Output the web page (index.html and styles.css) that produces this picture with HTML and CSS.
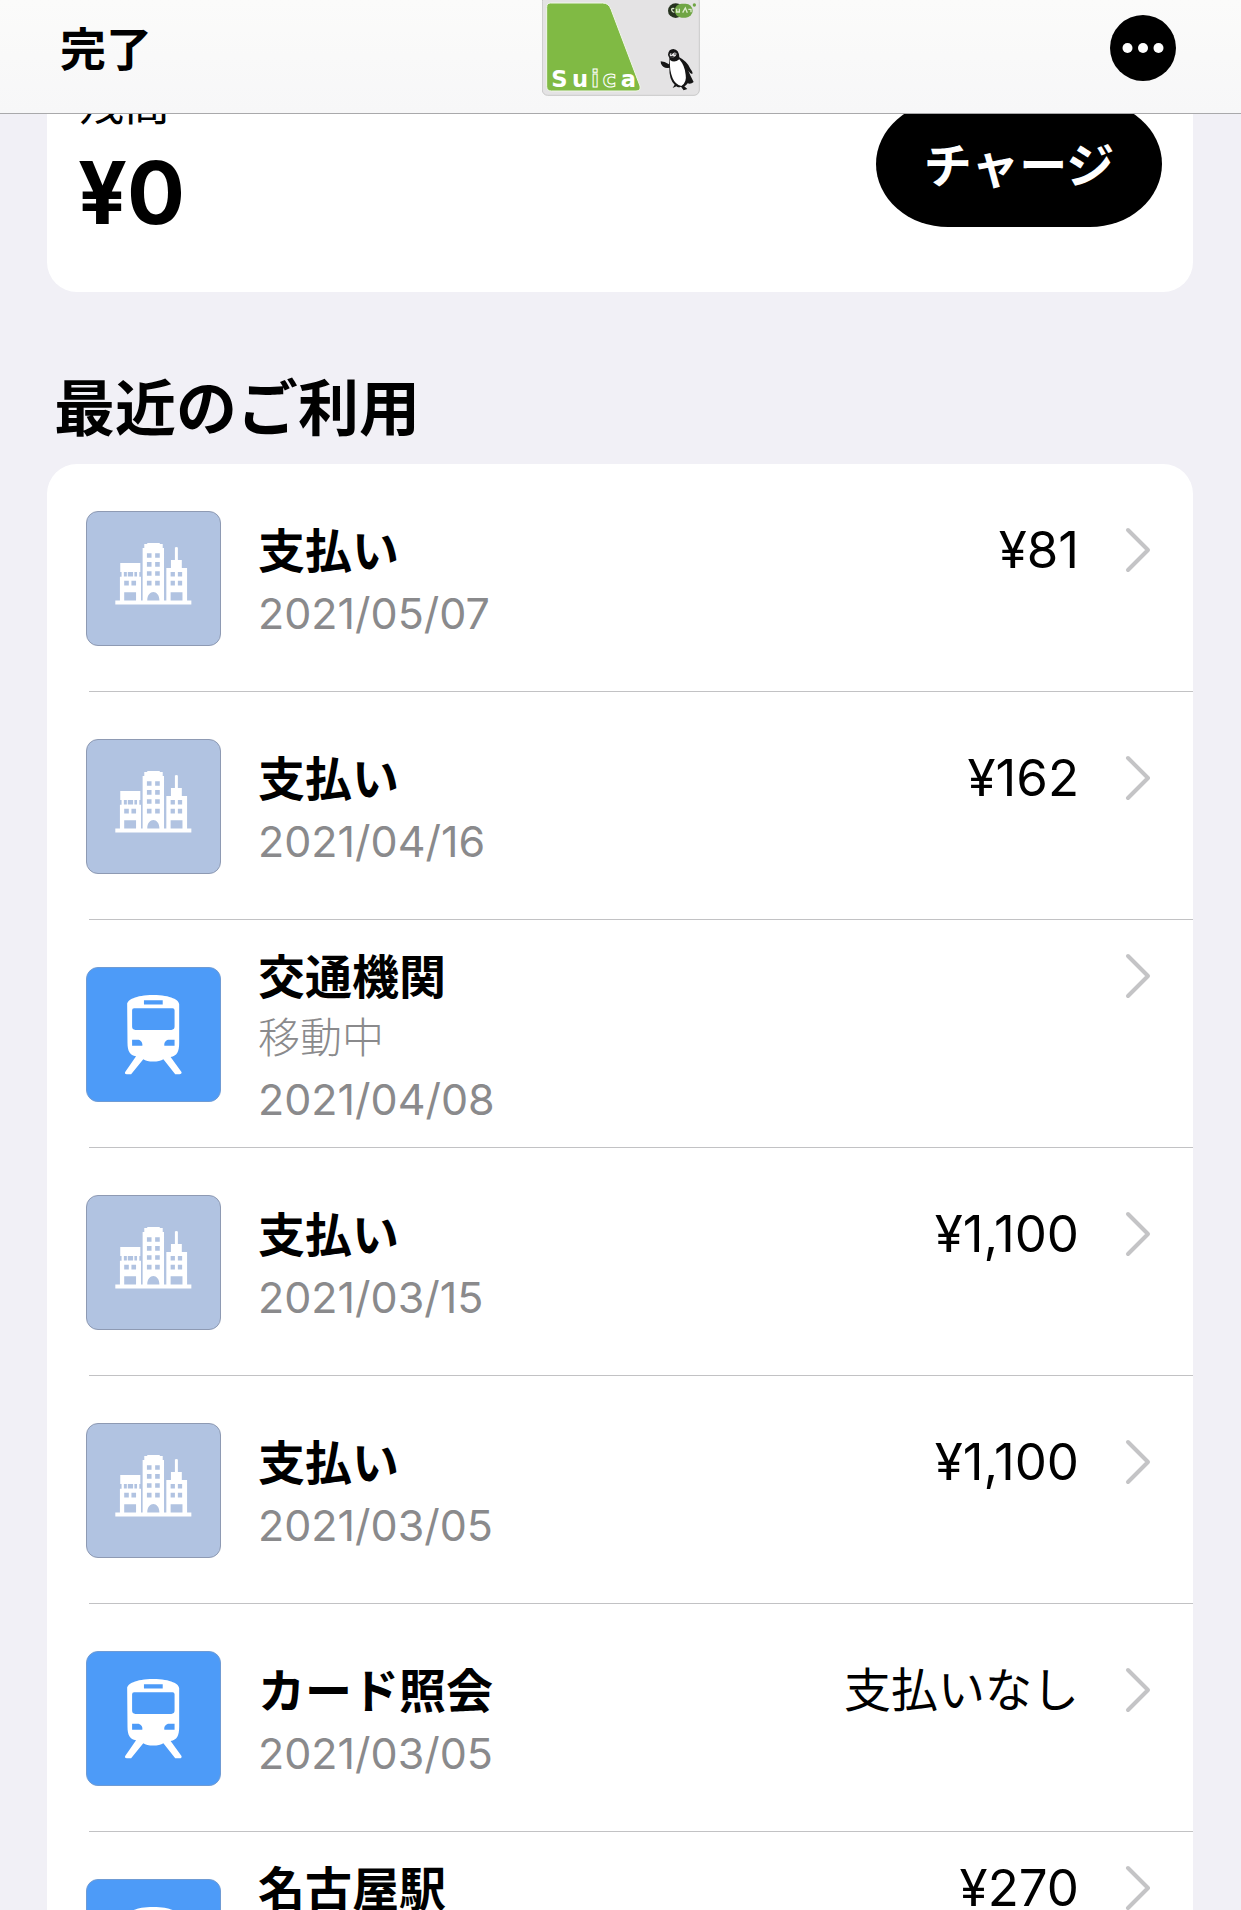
FILE: index.html
```html
<!DOCTYPE html>
<html lang="ja">
<head>
<meta charset="utf-8">
<meta name="viewport" content="width=device-width, initial-scale=1">
<title>Suica</title>
<link rel="stylesheet" href="styles.css">
</head>
<body>
<svg class="sprite" aria-hidden="true">
  <symbol id="city" viewBox="19 34 404 404">
    <path fill="#fff" fill-rule="evenodd" d="M105 303H119V231H124V216H120V189H181V216H178V231H183V303H188V143H193V131H202V128H240V131H249V143H253V303H260V204H274V180H286V142Q290 138 295 142V180H307V204H323V303H336V315H105ZM131 216v14h9v-14zM143 216v14h16v-14zM163 216v14h8v-14zM132 243v14h14v-14zM154 243v14h14v-14zM132 278v25h36v-25zM201 159v14h14v-14zM226 159v14h14v-14zM201 186v14h14v-14zM226 186v14h14v-14zM201 214v14h14v-14zM226 214v14h14v-14zM201 243v14h14v-14zM226 243v14h14v-14zM202 303C202 268 239 268 239 303zM273 216v14h13v-14zM295 216v14h13v-14zM273 243v14h13v-14zM295 243v14h13v-14zM273 278v25h36v-25z"/>
  </symbol>
  <symbol id="train" viewBox="19 22 404 404">
    <path fill="#fff" fill-rule="evenodd" d="M141 132C141 120 165 104 220 104S299 120 299 132V250C299 276 292 290 273 292L306 338Q308 345 300 345H287L251 299Q240 306 220 306T190 299L153 345H140Q132 344 135 338L168 290C149 288 142 274 142 250ZM192 120V133H249V120ZM162 144Q156 144 156 150V200Q156 210 166 210H275Q285 210 285 200V150Q285 144 279 144ZM156 240V258H187C189 248 181 240 173 240ZM285 240V258H254C252 248 260 240 268 240Z"/>
  </symbol>
  <symbol id="chevron" viewBox="0 0 26 46">
    <path d="M3 3L23 23L3 43" fill="none" stroke="#c4c4c6" stroke-width="4" stroke-linecap="round" stroke-linejoin="round"/>
  </symbol>
</svg>

<header class="bar">
  <button class="bar-done" type="button">完了</button>
  <svg class="bar-card" viewBox="66 0 474 288" role="img" aria-label="Suica">
    <rect x="67" y="-12" width="471" height="298" rx="16" fill="#e4e3e4" stroke="#c9c9c9" stroke-width="3"/>
    <path d="M92 9H248Q266 9 273 28L360 258Q363 273 348 273H94Q80 273 80 259V22Q80 9 92 9Z" fill="#80ba44" stroke="#f1f7ea" stroke-width="3"/>
    <g class="bar-card-text">
      <text x="94" y="262" fill="#fff">S</text>
      <text x="156" y="262" fill="#fff">u</text>
      <text x="214" y="262" fill="#80ba44" stroke="#fff" stroke-width="3">i</text>
      <text x="248" y="262" fill="#80ba44" stroke="#fff" stroke-width="3">c</text>
      <text x="302" y="262" fill="#fff">a</text>
    </g>
    <ellipse cx="467" cy="32" rx="23" ry="22" fill="#26331f"/>
    <rect x="464" y="11" width="54" height="42" rx="21" fill="#6fa544"/>
    <circle cx="523" cy="15" r="5" fill="#6fa544"/>
    <path d="M463 26Q454 24 455 30T463 37M470 26V36H478V26M488 38L496 24L502 38M505 28H513V37" fill="none" stroke="#dceccb" stroke-width="4"/>
    <path d="M444 165Q445 147 460 147Q477 148 478 172Q501 184 511 206Q521 219 516 222Q509 219 505 212Q512 229 521 246Q512 254 503 250Q498 257 493 259L502 267L491 271L483 260Q474 264 469 259L458 264L464 254Q447 238 448 203Q432 208 423 191L422 184L434 186L447 193Q449 182 448 174Z" fill="#151515"/>
    <path d="M450 180Q463 190 478 178Q495 198 497 224Q501 247 484 258Q466 254 458 235Q448 211 450 180Z" fill="#fff"/>
    <path d="M449 163Q453 156 457 162Q463 153 470 161L467 168L458 173L450 169Z" fill="#e4e3e4"/>
    <path d="M446 170L458 167L463 171L455 175Z" fill="#333"/>
    <circle cx="454" cy="162" r="2"/><circle cx="465" cy="162" r="2"/>
  </svg>
  <button class="bar-more" type="button" aria-label="その他">
    <svg viewBox="0 0 66 66" aria-hidden="true"><circle cx="33" cy="33" r="33"/><g fill="#fff"><circle cx="17.5" cy="33" r="5"/><circle cx="33" cy="33" r="5"/><circle cx="48.5" cy="33" r="5"/></g></svg>
  </button>
</header>

<main class="content">
  <section class="balance">
    <div>
      <p class="balance-label">残高</p>
      <p class="balance-value">¥0</p>
    </div>
    <button class="charge" type="button">チャージ</button>
  </section>

  <h2 class="heading">最近のご利用</h2>
  <ul class="list">
    <li><a class="row" href="#"><span class="tile"><svg><use href="#city"/></svg></span><span class="info"><strong>支払い</strong><time>2021/05/07</time></span><span class="amount">¥81</span><svg class="chevron"><use href="#chevron"/></svg></a></li>
    <li><a class="row" href="#"><span class="tile"><svg><use href="#city"/></svg></span><span class="info"><strong>支払い</strong><time>2021/04/16</time></span><span class="amount">¥162</span><svg class="chevron"><use href="#chevron"/></svg></a></li>
    <li><a class="row row-three" href="#"><span class="tile tile-transit"><svg><use href="#train"/></svg></span><span class="info"><strong>交通機関</strong><span class="status">移動中</span><time>2021/04/08</time></span><svg class="chevron"><use href="#chevron"/></svg></a></li>
    <li><a class="row" href="#"><span class="tile"><svg><use href="#city"/></svg></span><span class="info"><strong>支払い</strong><time>2021/03/15</time></span><span class="amount">¥1,100</span><svg class="chevron"><use href="#chevron"/></svg></a></li>
    <li><a class="row" href="#"><span class="tile"><svg><use href="#city"/></svg></span><span class="info"><strong>支払い</strong><time>2021/03/05</time></span><span class="amount">¥1,100</span><svg class="chevron"><use href="#chevron"/></svg></a></li>
    <li><a class="row" href="#"><span class="tile tile-transit"><svg><use href="#train"/></svg></span><span class="info"><strong>カード照会</strong><time>2021/03/05</time></span><span class="amount amount-none">支払いなし</span><svg class="chevron"><use href="#chevron"/></svg></a></li>
    <li><a class="row row-three" href="#"><span class="tile tile-transit"><svg><use href="#train"/></svg></span><span class="info"><strong>名古屋駅</strong></span><span class="amount">¥270</span><svg class="chevron"><use href="#chevron"/></svg></a></li>
  </ul>
</main>
</body>
</html>
```

FILE: styles.css
```css
* {
  box-sizing: border-box;
}

body {
  margin: 0;
  height: 100vh;
  overflow: hidden;
  background: #f1f0f6;
  color: #000;
  font-family: Inter, "Noto Sans CJK JP", sans-serif;
}

p,
h2,
ul {
  margin: 0;
  padding: 0;
}

button {
  border: 0;
  padding: 0;
  background: none;
  color: inherit;
  font-family: inherit;
  cursor: pointer;
}

.sprite {
  position: absolute;
  width: 0;
  height: 0;
}

/* Navigation bar */
.bar {
  position: sticky;
  top: 0;
  z-index: 1;
  display: grid;
  grid-template-columns: 1fr auto 1fr;
  align-items: start;
  height: 114px;
  padding: 0 60px;
  border-bottom: 1px solid #a9a9ab;
  background: linear-gradient(#fbfbfa, #f7f7f8);
}

.bar-done {
  justify-self: start;
  height: 92px;
  font-size: 46px;
  font-weight: 700;
}

.bar-card {
  display: block;
  width: 158px;
  height: 96px;
}

.bar-card-text {
  font: bold 68px "DejaVu Sans", sans-serif;
}

.bar-more {
  justify-self: end;
  width: 66px;
  height: 66px;
  margin: 15px 5px 0 0;
}

.bar-more svg {
  display: block;
}

.content {
  padding: 0 48px 0 47px;
}

/* Balance card, scrolled partly under the bar */
.balance {
  display: flex;
  justify-content: space-between;
  align-items: flex-start;
  margin-top: -60px;
  padding: 24px 31px 49px;
  border-radius: 30px;
  background: #fff;
}

.balance-label {
  font-size: 46px;
  line-height: 50px;
}

.balance-value {
  margin-top: 15px;
  font-size: 86px;
  font-weight: 700;
  line-height: 100px;
}

.charge {
  width: 286px;
  height: 126px;
  margin-top: 23px;
  padding-bottom: 4px;
  border-radius: 72px / 63px;
  background: #000;
  color: #fff;
  font-size: 48px;
  font-weight: 700;
}

.heading {
  padding: 72px 0 10px 7px;
  font-size: 61px;
  font-weight: 700;
  line-height: 90px;
}

/* Transactions */
.list {
  border-radius: 30px;
  background: #fff;
  list-style: none;
}

.list li + li::before {
  content: "";
  display: block;
  height: 1px;
  margin-left: 42px;
  background: #c2c2c4;
}

.row {
  display: flex;
  align-items: flex-start;
  height: 227px;
  padding: 55px 42px 0 39px;
  color: inherit;
  text-decoration: none;
}

.row-three {
  padding-top: 25px;
}

.tile {
  width: 135px;
  height: 135px;
  margin: -8px 37px 0 0;
  overflow: hidden;
  border: 1px solid #8e9ab3;
  border-radius: 12px;
  background: #b1c3e1;
}

.row-three .tile {
  margin-top: 22px;
}

.tile-transit {
  border-color: #6f9bd4;
  background: #4d9bf8;
}

.tile svg {
  display: block;
  width: 100%;
  height: 100%;
}

.info {
  display: flex;
  flex: 1;
  flex-direction: column;
}

.info strong {
  font-size: 47px;
  font-weight: 700;
  line-height: 63px;
}

.info time {
  color: #8a8a8c;
  font-size: 43px;
  line-height: 62px;
}

.info .status {
  color: #8a8a8c;
  font-size: 42px;
  font-weight: 300;
  line-height: 60px;
}

.amount {
  font-size: 51px;
  line-height: 62px;
}

.amount-none {
  font-size: 47px;
}

.chevron {
  width: 26px;
  height: 46px;
  margin: 8px 0 0 46px;
}
```
